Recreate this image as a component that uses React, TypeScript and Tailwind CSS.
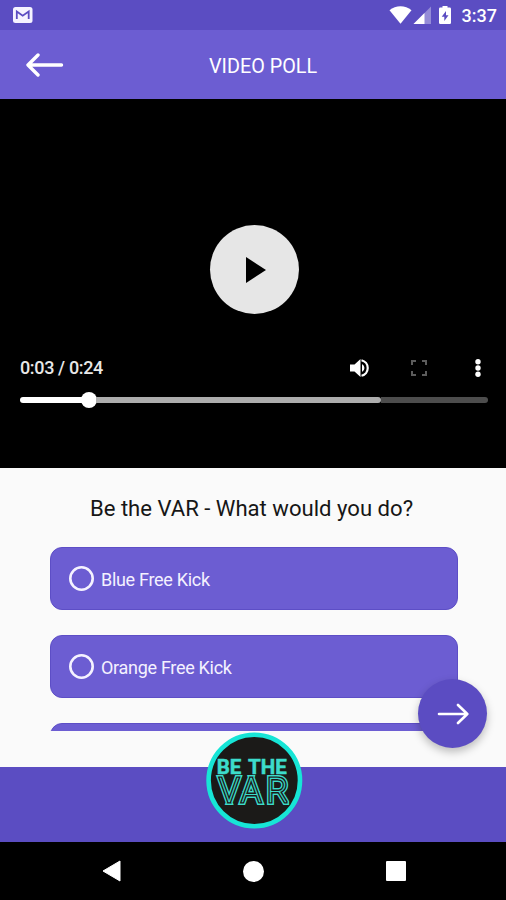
const options = [
  { id: 'blue', label: 'Blue Free Kick' },
  { id: 'orange', label: 'Orange Free Kick' },
];

function StatusBar() {
  return (
    <div className="flex h-[30px] items-center justify-between bg-[#5b4dc2] pl-[13px] pr-[9px]">
      <svg width="20" height="16" viewBox="0 0 20 16">
        <rect width="19.5" height="16" rx="2.5" fill="#f5f3ff" />
        <path d="M3.8 12V4.5L9.7 8.7L15.7 4.5V12" fill="none" stroke="#5b4dc2" strokeWidth="1.8" />
      </svg>
      <div className="flex items-center">
        {/* wifi, signal, battery */}
        <svg width="65" height="20" viewBox="0 0 65 20" fill="#fff">
          <path d="M0.5 5.3C6.7 -0.2 16.3 -0.2 22.5 5.3L11.5 18.7Z" />
          <path d="M42 1.5V19H24.5Z" opacity=".35" />
          <path d="M35.5 8V19H24.5Z" />
          <path
            fillRule="evenodd"
            d="M53.5 1h5v1.6h2.2a1.3 1.3 0 0 1 1.3 1.3v13.8a1.3 1.3 0 0 1-1.3 1.3h-9.4a1.3 1.3 0 0 1-1.3-1.3V3.9a1.3 1.3 0 0 1 1.3-1.3h2.2zM57 6l-4.3 5.8h2.6V16l4.2-5.8H57z"
          />
        </svg>
        <span className="ml-[8px] pt-px text-[18px] leading-5 font-medium text-white">3:37</span>
      </div>
    </div>
  );
}

function Header() {
  return (
    <header className="grid h-[69px] grid-cols-[1fr_auto_1fr] items-center bg-[#6c5dd2] pl-[26px] pr-[6px]">
      <button aria-label="Back">
        <svg width="38" height="24" viewBox="0 0 38 24" fill="none" stroke="#fff" strokeWidth="3.4" strokeLinecap="round" strokeLinejoin="round">
          <path d="M35.5 12H2.5M12 2L2 12L12 22" />
        </svg>
      </button>
      <h1 className="pt-[5px] text-[19.8px] leading-6 text-white">VIDEO POLL</h1>
    </header>
  );
}

function VideoPlayer() {
  return (
    <section className="flex h-[369px] flex-col bg-black pt-[126px]">
      <button aria-label="Play" className="ml-[2px] flex size-[89px] items-center justify-center self-center rounded-full bg-[#e6e6e6]">
        <svg width="20" height="26" viewBox="0 0 20 26" className="ml-1">
          <path d="M0 0L20 13L0 26Z" />
        </svg>
      </button>

      <div className="mt-[42px] flex h-6 items-center pl-5 pr-[18px]">
        <span className="flex-1 text-[18px] leading-6 font-medium tracking-[-0.36px] text-[#e8e8e8]">0:03 / 0:24</span>
        <svg width="20" height="20" viewBox="0 0 20 20" fill="#fff">
          <path d="M0 6.5H4.5L10.5 1V19L4.5 13.5H0Z" />
          <path d="M12 6a4.5 4.5 0 0 1 0 8z" />
          <path d="M11.5 2.2a8 8 0 0 1 0 15.6" fill="none" stroke="#fff" strokeWidth="2.2" />
        </svg>
        <svg width="16" height="16" viewBox="0 0 16 16" fill="none" stroke="#5c5c5c" strokeWidth="2" className="ml-[41px]">
          <path d="M1 5V1H5M11 1H15V5M15 11V15H11M5 15H1V11" />
        </svg>
        <svg width="6" height="18" viewBox="0 0 6 18" fill="#fff" className="ml-[48px] mr-[7px]">
          <circle cx="3" cy="2.7" r="2.7" />
          <circle cx="3" cy="9" r="2.7" />
          <circle cx="3" cy="15.3" r="2.7" />
        </svg>
      </div>

      <div className="mt-[12px] ml-5 flex h-4 w-[468px] items-center">
        <div className="h-[6px] w-[62px] rounded-l-full bg-white" />
        <div className="-mx-px size-4 rounded-full bg-white" />
        <div className="h-[6px] w-[285px] rounded-r-full bg-[#adadad]" />
        <div className="h-[6px] flex-1 rounded-r-full bg-[#4d4d4d]" />
      </div>
    </section>
  );
}

function PollOption({ label }: { label?: string }) {
  return (
    <button className="flex h-[63px] w-full shrink-0 items-center rounded-[12px] border border-[#5d4ec6] bg-[#6c5dd2] pl-[18px]">
      {label && (
        <>
          <svg width="25" height="25" viewBox="0 0 25 25">
            <circle cx="12.5" cy="12.5" r="11.2" fill="none" stroke="#f5f2ff" strokeWidth="2.6" />
          </svg>
          <span className="ml-[7px] pt-0.5 text-[18px] leading-6 tracking-[-0.3px] text-[#f4f1ff]">{label}</span>
        </>
      )}
    </button>
  );
}

function Poll() {
  return (
    <section className="relative h-[299px] bg-[#fafafa] pt-[26px]">
      <h2 className="mr-[3px] text-center text-[22.1px] leading-7 text-[#161616]">Be the VAR - What would you do?</h2>
      <div className="mt-[25px] ml-[50px] flex h-[184px] w-[408px] flex-col gap-[25px] overflow-hidden">
        {options.map((o) => (
          <PollOption key={o.id} label={o.label} />
        ))}
        {/* next row peeks in from below */}
        <PollOption />
      </div>
      <button
        aria-label="Next"
        className="absolute top-[211px] right-[19px] flex size-[69px] items-center justify-center rounded-full bg-[#5b4cc2] shadow-[0_4px_8px_rgba(0,0,0,0.25)]"
      >
        <svg width="32" height="22" viewBox="0 0 32 22" fill="none" stroke="#fff" strokeWidth="2.6" strokeLinecap="round" strokeLinejoin="round">
          <path d="M2 11H30M21 2L30.3 11L21 20" />
        </svg>
      </button>
    </section>
  );
}

function Footer() {
  return (
    <footer className="relative h-[75px] bg-[#5b4dc2]">
      <svg width="98" height="98" viewBox="0 0 98 98" className="absolute top-[-36px] left-[205px] z-10">
        <defs>
          <text id="var" x="14.5 36.5 62" y="71.2" fontFamily="Roboto" fontSize="32.5" fontWeight="100">VAR</text>
        </defs>
        <circle cx="49.3" cy="49.5" r="45.7" fill="#1b1a18" stroke="#17e5d6" strokeWidth="4.6" />
        <text x="11.7" y="43" fontFamily="Roboto" fontSize="20.5" fontWeight="700" wordSpacing="2" textLength="70" lengthAdjust="spacingAndGlyphs" fill="#3cdccb" stroke="#3cdccb" strokeWidth="0.5">
          BE THE
        </text>
        {/* outline, dark gap and a centre line */}
        <use href="#var" fill="none" stroke="#3cdccb" strokeWidth="6" />
        <use href="#var" fill="none" stroke="#1b1a18" strokeWidth="3.2" />
        <use href="#var" fill="#3cdccb" stroke="#3cdccb" strokeWidth="0.3" />
      </svg>
    </footer>
  );
}

function NavBar() {
  return (
    <nav className="flex h-[58px] items-center justify-between bg-black pl-[102px] pr-[100px]">
      <svg width="19" height="22" viewBox="0 0 19 22" fill="#fff">
        <path d="M18 1V21L1 11Z" stroke="#fff" strokeLinejoin="round" />
      </svg>
      <div className="size-[21px] rounded-full bg-white" />
      <div className="size-5 rounded-[1px] bg-white" />
    </nav>
  );
}

export default function App() {
  return (
    <div className="flex h-[900px] w-[506px] flex-col overflow-hidden font-[Roboto,sans-serif]">
      <StatusBar />
      <Header />
      <VideoPlayer />
      <Poll />
      <Footer />
      <NavBar />
    </div>
  );
}
